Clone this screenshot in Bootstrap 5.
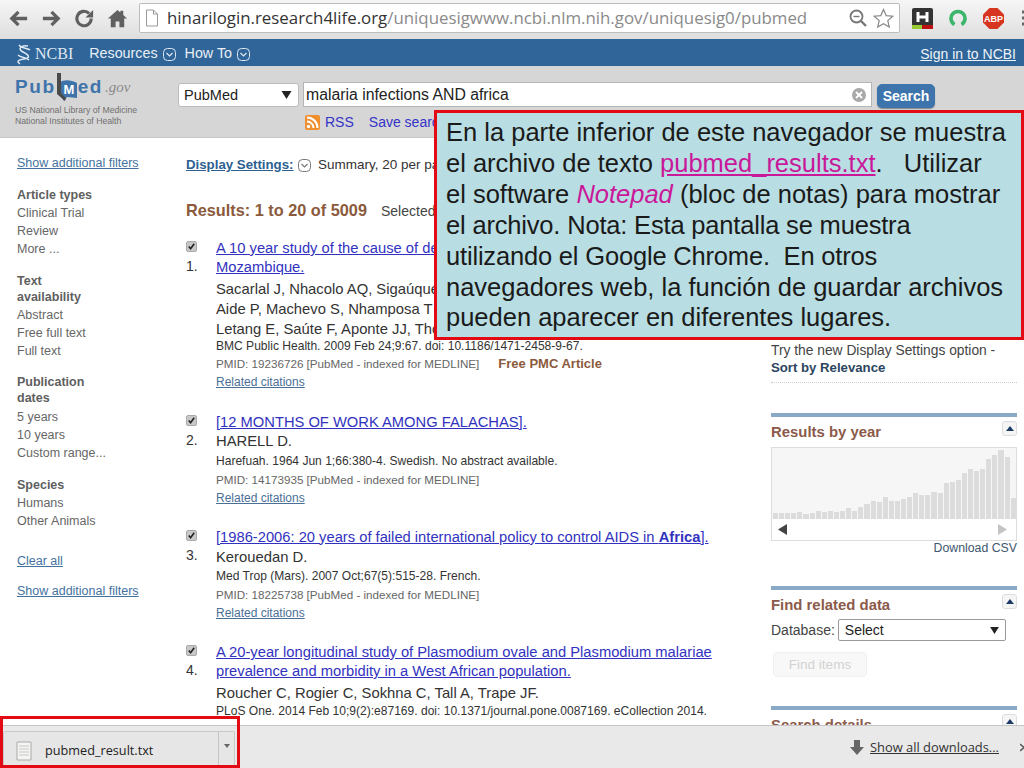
<!DOCTYPE html>
<html lang="es">
<head>
<meta charset="utf-8">
<title>PubMed</title>
<link href="https://cdn.jsdelivr.net/npm/bootstrap@5.3.0/dist/css/bootstrap.min.css" rel="stylesheet">
<style>
html,body{height:768px;overflow:hidden}
body{font-family:"Liberation Sans",Arial,sans-serif;color:#222;background:#fff;position:relative;width:1024px;font-size:13px}
.shell{height:768px;width:1024px}
.chrome-bar{height:39px;background:linear-gradient(#f6f6f6,#dedede);flex:none;padding:0 0 3px 7px;gap:4px;overflow:hidden}
.tool-ico{flex:none;width:23px;height:23px;fill:#606060;stroke:#606060}
.tool-next{margin-left:6px}
.omni{flex:none;width:761px;height:30px;margin-left:6px;background:#fff;border:1px solid #bdbdbd;border-radius:2px;font-family:"Open Sans",sans-serif;font-size:16.85px;color:#8a8a8a;white-space:nowrap;padding:0 5px}
.omni b{font-weight:400;color:#333}
.omni-page{margin-right:8px;flex:none}
.omni-zoom{margin-left:auto;margin-right:5px}
.ext-h{flex:none;margin-left:8px}
.ext-g{flex:none;margin-left:12px}
.ext-a{flex:none;margin-left:12px}
.ext-m{flex:none;margin-left:14px}
.ncbi-bar{height:27px;background:#2f6598;flex:none;color:#e9eff6;padding:3px 8px 0 15px}
.ncbi-name{font-family:"Liberation Serif",serif;font-size:16px;margin-left:3px;margin-right:16px;color:#dfe8f2}
.ncbi-item{font-size:14.3px;font-weight:500;margin-right:5px}
.ncbi-gap{margin-right:9px}
.ncbi-sign{font-size:14px;color:#eef3fa;text-decoration:underline}
.hdr{height:72px;background:#d6d6d6;flex:none;border-bottom:1px solid #c8c8c8;padding-left:15px}
.logo-col{width:163px;flex:none;padding-top:7px}
.logo-word{font-size:19px;font-weight:700;color:#3f74ab;line-height:28px;height:28px;white-space:nowrap;letter-spacing:1.6px;margin-bottom:4px}
.logo-gov{font-family:"Liberation Serif",serif;font-style:italic;font-weight:400;font-size:15px;color:#8a8a8a;letter-spacing:0;margin-left:2px}
.logo-sub{font-size:8.7px;line-height:11px;color:#707070;white-space:nowrap}
.search-row{padding-top:16px}
.db-select{width:121px;height:24px;margin-top:1px;font-size:14.5px;line-height:22px;padding:0 0 0 5px;border:1px solid #bbb;border-radius:3px;color:#222;font-family:"Liberation Sans",sans-serif;background-size:11px 8px;background-position:right 6px center;background-image:url("data:image/svg+xml,%3Csvg xmlns='http://www.w3.org/2000/svg' viewBox='0 0 10 8'%3E%3Cpath d='M0 0h10L5 8z' fill='%23222'/%3E%3C/svg%3E")}
.q-wrap{width:569px;height:25px;margin-left:4px;position:relative}
.q-input{width:100%;height:25px;font-size:15.8px;padding:1px 2px 0;border:1px solid #b5b5b5;border-radius:0;color:#222;font-family:"Liberation Sans",sans-serif}
.q-clear{position:absolute;right:6px;top:6px;width:14px;height:14px}
.go-btn{width:58px;height:24px;margin:2px 0 0 5px;padding:0;background:#3d74ab;border:1px solid #3d74ab;border-radius:5px;color:#fff;font-weight:700;font-size:14px;line-height:22px;box-shadow:0 1px 1px #888}
.rss-row{margin-top:6px;margin-left:127px;font-size:14px;color:#3434c8;white-space:nowrap;line-height:16px;height:16px}
.rss-row span{margin-left:5px;margin-right:10px}
.body-row{flex:1 1 0;min-height:0;overflow:hidden}
.side-col{width:186px;flex:none;padding:16px 0 0 17px;color:#666;font-size:12.5px}
.side-col div{white-space:nowrap}
.s-row{line-height:18px}
.s-link{line-height:18px;color:#44729e;text-decoration:underline}
.s-h{line-height:16px;font-weight:700;color:#5f5f5f}
.s-g14{margin-top:14px}
.s-g15{margin-top:15px}
.s-g2{margin-top:2px}
.s-g1{margin-top:1px}
.s-g22{margin-top:22px}
.s-g12{margin-top:12px}
.main-col{width:570px;flex:none;padding-top:18px;white-space:nowrap;overflow:hidden}
.disp{line-height:18px;font-size:13.5px;color:#333}
.disp-link{color:#2d5f91;font-weight:700;font-size:13.25px;text-decoration:underline}
.disp-ico{margin:0 3px 0 1px}
.res-line{line-height:20px;margin-top:26px;font-size:16.3px}
.res-line b{color:#8b5a3c;margin-right:14px}
.res-line span{font-size:14px;color:#444}
.rec{display:flex}
.rec-1{margin-top:18px}
.rec-2{margin-top:22.5px}
.rec-3{margin-top:20.5px}
.rec-4{margin-top:21.5px}
.rec-l{width:30px;flex:none;font-size:14px;color:#333;line-height:19px}
.rec-check.form-check-input{display:block;width:11px;height:11px;margin:2px 0 5px 0;border-radius:2px;border:1px solid #aaa;background-size:100%;background-color:#c8c8c8;background-image:url("data:image/svg+xml,%3Csvg xmlns='http://www.w3.org/2000/svg' viewBox='0 0 10 10'%3E%3Cpath d='M2 5l2 2.5L8 2' fill='none' stroke='%23222' stroke-width='1.8'/%3E%3C/svg%3E")}
.rec-t{line-height:19px;font-size:14.72px;color:#3232c0;text-decoration:underline;display:block}
.rec-a{line-height:20px;font-size:14.8px;color:#333}
.rec-j{line-height:18px;font-size:12.05px;color:#333}
.rec-p{line-height:18px;font-size:11.65px;color:#666}
.rec-r{line-height:18px;font-size:12px;color:#4a7096;text-decoration:underline;display:block}
.rec-free{color:#8b5a3c;font-weight:700;margin-left:19px;font-size:13px}
.after-2{margin-top:1.5px}
.pull-2{margin-top:-2px}
.push-1{margin-top:1px}
.pull-1{margin-top:-1px}
.right-col{width:246px;flex:none;margin-left:15px;padding-top:204px;font-size:13.8px;color:#444}
.tip{line-height:17px;white-space:nowrap}
.tip b{color:#2c4560;font-weight:700;font-size:13.2px}
.dots{border-bottom:1px dotted #ccc;margin-top:6px;height:1px}
.pane{border-top:4px solid #8aa9c6;position:relative}
.pane-a{margin-top:30px}
.pane-b{margin-top:31px}
.pane-c{margin-top:29px}
.pane-h{font-size:14.9px;font-weight:700;color:#8b5a4a;line-height:20px;margin-top:5px}
.pane-btn{position:absolute;right:0;top:4px;width:15px;height:15px;border:1px solid #ddd;border-radius:3px;background:#f5f5f5}
.pane-btn::after{content:"";position:absolute;left:3px;top:4px;border:4px solid transparent;border-top:0;border-bottom:5px solid #1e3a66}
.chart-box{height:94px;border:1px solid #ddd;margin-top:5px}
.chart-bars{height:71px;background:#f6f6f6;gap:1px;padding:0 0 0 1px}
.yr-bar{flex:1 1 0;background:#dcdcdc}
.chart-nav{height:21px;padding:0 9px 0 6px}
.csv{text-align:right;color:#3e566e;font-size:12.3px;line-height:14px}
.db-row{margin-top:4px;line-height:22px;height:22px;font-size:14px;white-space:nowrap}
.db2{width:168px;flex:none;height:22px;font-size:14px;padding:0 0 0 6px;margin-left:3px;border:1px solid #999;border-radius:2px;color:#222;line-height:20px;font-family:"Liberation Sans",sans-serif;background-size:9px 7px;background-position:right 6px center;background-image:url("data:image/svg+xml,%3Csvg xmlns='http://www.w3.org/2000/svg' viewBox='0 0 10 8'%3E%3Cpath d='M0 0h10L5 8z' fill='%23222'/%3E%3C/svg%3E")}
.find-btn.btn:disabled{margin:11px 0 0 2px;width:94px;height:25px;padding:0;font-size:13.5px;color:#d2d2d2;background:#f8f8f8;border:1px solid #f0f0f0;border-radius:4px;line-height:23px;display:block;opacity:1}
.dl-bar{height:43px;background:#e9e9e9;border-top:1px solid #c6c6c6;flex:none;padding:5px 0 0 3px;position:relative;z-index:2;overflow:hidden}
.dl-item{width:232px;height:38px;border:1px solid #c9c9c9;border-bottom:0;background:#e6e6e6;border-radius:2px 2px 0 0;font-family:"Open Sans",sans-serif;font-size:12.7px;color:#222;padding-left:12px}
.dl-name{margin-left:13px;flex:1 1 auto}
.dl-more{width:16px;border-left:1px solid #c4c4c4;height:100%;position:relative}
.dl-more::after{content:"";position:absolute;left:5px;top:12px;border:3.5px solid transparent;border-top:4px solid #666;border-bottom:0}
.dl-all{font-family:"Open Sans",sans-serif;font-size:12.9px;color:#333;text-decoration:underline;margin-left:6px}
.dl-x{margin-left:21px;flex:none}
.callout{position:absolute;left:434px;top:110px;width:590px;height:230px;background:#b8dde2;border:3px solid #e40a14;padding:4px 8px 0 9px;font-size:25.5px;line-height:30.9px;color:#1a1a1a;white-space:nowrap;z-index:5}
.callout-link{color:#c9189a;text-decoration:underline}
.callout i{color:#c9189a}
.tight-line{letter-spacing:-.18px}
.red-frame{position:absolute;left:0;top:716px;width:240px;height:52px;border:3px solid #e40a14;z-index:6;pointer-events:none}
</style>
</head>
<body>
<div class="shell d-flex flex-column">

  <div class="chrome-bar d-flex align-items-center">
    <svg class="tool-ico" viewBox="0 0 24 24"><path d="M21 12H6M12 5l-7 7 7 7" fill="none" stroke-width="3.4"/></svg>
    <svg class="tool-ico tool-next" viewBox="0 0 24 24"><path d="M3 12h15M12 5l7 7-7 7" fill="none" stroke-width="3.4"/></svg>
    <svg class="tool-ico tool-next" viewBox="0 0 24 24"><path d="M19 12a7.5 7.5 0 1 1-2.2-5.3" fill="none" stroke-width="3.2"/><path d="M21 3v8h-8z" stroke="none"/></svg>
    <svg class="tool-ico tool-next" viewBox="0 0 24 24"><path d="M12 3L2 12h3v9h5v-6h4v6h5v-9h3l-4-3.6V4h-3v1.7z" stroke="none"/></svg>
    <div class="omni d-flex align-items-center">
      <svg width="14" height="18" viewBox="0 0 14 18" class="omni-page"><path d="M1.5 1h7l4 4v12h-11zM8.5 1v4h4" fill="#fff" stroke="#999"/></svg>
      <span><b>hinarilogin.research4life.org</b>/uniquesigwww.ncbi.nlm.nih.gov/uniquesig0/pubmed</span>
      <svg width="20" height="20" viewBox="0 0 20 20" class="omni-zoom"><circle cx="8.5" cy="8.5" r="6" fill="none" stroke="#777" stroke-width="1.8"/><path d="M13 13l5 5" stroke="#777" stroke-width="2.4"/><path d="M5.5 8.5h6" stroke="#777" stroke-width="1.4"/></svg>
      <svg width="21" height="21" viewBox="0 0 21 21"><path d="M10.500 1.500l2.700 6.100 6.600.6-5 4.400 1.500 6.500-5.800-3.400-5.800 3.400 1.500-6.500-5-4.400 6.600-.6z" fill="#fff" stroke="#888" stroke-width="1.2"/></svg>
    </div>
    <svg width="21" height="21" viewBox="0 0 21 21" class="ext-h"><rect width="21" height="21" rx="2" fill="#333"/><rect y="17" width="10" height="4" fill="#9c3"/><rect x="10" y="17" width="11" height="4" fill="#b11"/><path d="M6 4v10M15 4v10M6 9h9" stroke="#fff" stroke-width="3"/></svg>
    <svg width="18" height="18" viewBox="0 0 18 18" class="ext-g"><path d="M5.500 15.500A7 7 0 1 1 12.500 15.500" fill="none" stroke="#3db56b" stroke-width="3.600"/></svg>
    <svg width="21" height="21" viewBox="0 0 21 21" class="ext-a"><path d="M6.500 0h8L21 6.500v8L14.500 21h-8L0 14.500v-8z" fill="#d6361f"/><text x="10.500" y="14" text-anchor="middle" font-size="9" font-weight="700" fill="#fff" font-family="Liberation Sans">ABP</text></svg>
    <svg width="4" height="16" viewBox="0 0 4 16" class="ext-m"><path d="M0 2h4M0 8h4M0 14h4" stroke="#666" stroke-width="3"/></svg>
  </div>

  <div class="ncbi-bar d-flex align-items-center">
    <svg width="17" height="21" viewBox="0 0 17 21"><path d="M13 2C6 1 2 5 8 8s8 6 1 7-7 3-4 5M4 1c3 4 9 3 11 5M3 11c3 3 8 2 11 5" fill="none" stroke="#dfe8f2" stroke-width="1.500"/></svg>
    <span class="ncbi-name">NCBI</span>
    <span class="ncbi-item">Resources</span>
    <svg width="13" height="13" viewBox="0 0 13 13" class="ncbi-gap"><rect x=".5" y=".5" width="12" height="12" rx="4" fill="none" stroke="#dfe8f2"/><path d="M3.500 5l3 3 3-3" fill="none" stroke="#dfe8f2" stroke-width="1.200"/></svg>
    <span class="ncbi-item">How To</span>
    <svg width="13" height="13" viewBox="0 0 13 13"><rect x=".5" y=".5" width="12" height="12" rx="4" fill="none" stroke="#dfe8f2"/><path d="M3.500 5l3 3 3-3" fill="none" stroke="#dfe8f2" stroke-width="1.200"/></svg>
    <a class="ncbi-sign ms-auto">Sign in to NCBI</a>
  </div>

  <div class="hdr d-flex">
    <div class="logo-col">
      <div class="logo-word d-flex align-items-start"><span>Pub</span><svg width="22" height="28" viewBox="0 0 22 28"><path d="M3 10C8 6 15 7 21 10v15l-10-1-3 4-5-7z" fill="#3f74ab"/><path d="M1 0h4v20l5 5-1 3-8-7z" fill="#4a4a4a"/><text x="13" y="21" text-anchor="middle" font-size="13" font-weight="700" letter-spacing="0" fill="#fff" font-family="Liberation Sans">M</text></svg><span>ed</span><span class="logo-gov">.gov</span></div>
      <div class="logo-sub">US National Library of Medicine</div>
      <div class="logo-sub">National Institutes of Health</div>
    </div>
    <div class="search-row">
      <div class="d-flex">
        <select class="form-select db-select" aria-label="Database"><option>PubMed</option></select>
        <div class="q-wrap">
          <input class="form-control q-input" value="malaria infections AND africa" aria-label="Search">
          <svg class="q-clear" viewBox="0 0 14 14"><circle cx="7" cy="7" r="7" fill="#a9a9a9"/><path d="M4 4l6 6M10 4l-6 6" stroke="#fff" stroke-width="1.800"/></svg>
        </div>
        <button class="btn go-btn" type="button">Search</button>
      </div>
      <div class="rss-row d-flex align-items-center">
        <svg width="15" height="15" viewBox="0 0 15 15"><rect width="15" height="15" rx="2" fill="#ef8f2e"/><circle cx="3.500" cy="11.500" r="1.700" fill="#fff"/><path d="M2 6.500a6.500 6.500 0 0 1 6.500 6.500M2 2.500a10.500 10.500 0 0 1 10.500 10.500" fill="none" stroke="#fff" stroke-width="2"/></svg>
        <span>RSS</span><span>Save search</span>
      </div>
    </div>
  </div>

  <div class="body-row d-flex">
    <div class="side-col">
      <div class="s-link">Show additional filters</div>
      <div class="s-h s-g15">Article types</div>
      <div class="s-row s-g1">Clinical Trial</div>
      <div class="s-row">Review</div>
      <div class="s-row">More ...</div>
      <div class="s-h s-g15">Text</div>
      <div class="s-h">availability</div>
      <div class="s-row s-g1">Abstract</div>
      <div class="s-row">Free full text</div>
      <div class="s-row">Full text</div>
      <div class="s-h s-g14">Publication</div>
      <div class="s-h">dates</div>
      <div class="s-row s-g2">5 years</div>
      <div class="s-row">10 years</div>
      <div class="s-row">Custom range...</div>
      <div class="s-h s-g15">Species</div>
      <div class="s-row s-g1">Humans</div>
      <div class="s-row">Other Animals</div>
      <div class="s-link s-g22">Clear all</div>
      <div class="s-link s-g12">Show additional filters</div>
    </div>

    <div class="main-col">
      <div class="disp"><a class="disp-link">Display Settings:</a> <svg width="13" height="13" viewBox="0 0 13 13" class="disp-ico"><rect x=".5" y=".5" width="12" height="12" rx="4" fill="none" stroke="#777"/><path d="M3.500 5l3 3 3-3" fill="none" stroke="#777" stroke-width="1.200"/></svg> Summary, 20 per page</div>
      <div class="res-line"><b>Results: 1 to 20 of 5009</b><span>Selected</span></div>

      <div class="rec rec-1">
        <div class="rec-l"><input class="form-check-input rec-check" type="checkbox" checked aria-label="1">1.</div>
        <div>
          <a class="rec-t">A 10 year study of the cause of death</a>
          <a class="rec-t">Mozambique.</a>
          <div class="rec-a after-2">Sacarlal J, Nhacolo AQ, Sigaúque B</div>
          <div class="rec-a">Aide P, Machevo S, Nhamposa T</div>
          <div class="rec-a">Letang E, Saúte F, Aponte JJ, Thompson R</div>
          <div class="rec-j pull-2">BMC Public Health. 2009 Feb 24;9:67. doi: 10.1186/1471-2458-9-67.</div>
          <div class="rec-p">PMID: 19236726 [PubMed - indexed for MEDLINE]<span class="rec-free">Free PMC Article</span></div>
          <a class="rec-r">Related citations</a>
        </div>
      </div>

      <div class="rec rec-2">
        <div class="rec-l"><input class="form-check-input rec-check" type="checkbox" checked aria-label="2">2.</div>
        <div>
          <a class="rec-t">[12 MONTHS OF WORK AMONG FALACHAS].</a>
          <div class="rec-a pull-1">HARELL D.</div>
          <div class="rec-j push-1">Harefuah. 1964 Jun 1;66:380-4. Swedish. No abstract available.</div>
          <div class="rec-p push-1">PMID: 14173935 [PubMed - indexed for MEDLINE]</div>
          <a class="rec-r">Related citations</a>
        </div>
      </div>

      <div class="rec rec-3">
        <div class="rec-l"><input class="form-check-input rec-check" type="checkbox" checked aria-label="3">3.</div>
        <div>
          <a class="rec-t">[1986-2006: 20 years of failed international policy to control AIDS in <b>Africa</b>].</a>
          <div class="rec-a">Kerouedan D.</div>
          <div class="rec-j">Med Trop (Mars). 2007 Oct;67(5):515-28. French.</div>
          <div class="rec-p push-1">PMID: 18225738 [PubMed - indexed for MEDLINE]</div>
          <a class="rec-r">Related citations</a>
        </div>
      </div>

      <div class="rec rec-4">
        <div class="rec-l"><input class="form-check-input rec-check" type="checkbox" checked aria-label="4">4.</div>
        <div>
          <a class="rec-t">A 20-year longitudinal study of Plasmodium ovale and Plasmodium malariae</a>
          <a class="rec-t">prevalence and morbidity in a West African population.</a>
          <div class="rec-a after-2">Roucher C, Rogier C, Sokhna C, Tall A, Trape JF.</div>
          <div class="rec-j pull-1">PLoS One. 2014 Feb 10;9(2):e87169. doi: 10.1371/journal.pone.0087169. eCollection 2014.</div>
        </div>
      </div>
    </div>

    <div class="right-col">
      <div class="tip">Try the new Display Settings option -</div>
      <div class="tip"><b>Sort by Relevance</b></div>
      <div class="dots"></div>

      <div class="pane pane-a">
        <div class="pane-btn"></div>
        <div class="pane-h">Results by year</div>
        <div class="chart-box">
          <div class="chart-bars d-flex align-items-end">
            <div class="yr-bar" style="height:6px"></div><div class="yr-bar" style="height:6px"></div><div class="yr-bar" style="height:6px"></div><div class="yr-bar" style="height:6px"></div><div class="yr-bar" style="height:7px"></div><div class="yr-bar" style="height:5px"></div><div class="yr-bar" style="height:6px"></div><div class="yr-bar" style="height:8px"></div><div class="yr-bar" style="height:7px"></div><div class="yr-bar" style="height:8px"></div><div class="yr-bar" style="height:7px"></div><div class="yr-bar" style="height:8px"></div><div class="yr-bar" style="height:11px"></div><div class="yr-bar" style="height:8px"></div><div class="yr-bar" style="height:12px"></div><div class="yr-bar" style="height:15px"></div><div class="yr-bar" style="height:18px"></div><div class="yr-bar" style="height:17px"></div><div class="yr-bar" style="height:22px"></div><div class="yr-bar" style="height:18px"></div><div class="yr-bar" style="height:18px"></div><div class="yr-bar" style="height:20px"></div><div class="yr-bar" style="height:22px"></div><div class="yr-bar" style="height:26px"></div><div class="yr-bar" style="height:24px"></div><div class="yr-bar" style="height:24px"></div><div class="yr-bar" style="height:27px"></div><div class="yr-bar" style="height:26px"></div><div class="yr-bar" style="height:36px"></div><div class="yr-bar" style="height:37px"></div><div class="yr-bar" style="height:39px"></div><div class="yr-bar" style="height:46px"></div><div class="yr-bar" style="height:50px"></div><div class="yr-bar" style="height:48px"></div><div class="yr-bar" style="height:50px"></div><div class="yr-bar" style="height:60px"></div><div class="yr-bar" style="height:64px"></div><div class="yr-bar" style="height:69px"></div><div class="yr-bar" style="height:62px"></div><div class="yr-bar" style="height:21px"></div>
          </div>
          <div class="chart-nav d-flex align-items-center justify-content-between">
            <svg width="9" height="11" viewBox="0 0 9 11"><path d="M9 0v11L0 5.500z" fill="#444"/></svg>
            <svg width="9" height="11" viewBox="0 0 9 11"><path d="M0 0v11l9-5.500z" fill="#c4c4c4"/></svg>
          </div>
        </div>
        <div class="csv">Download CSV</div>
      </div>

      <div class="pane pane-b">
        <div class="pane-btn"></div>
        <div class="pane-h">Find related data</div>
        <div class="db-row d-flex align-items-center">Database: <select class="form-select db2" aria-label="Database"><option>Select</option></select></div>
        <button class="btn find-btn" type="button" disabled>Find items</button>
      </div>

      <div class="pane pane-c">
        <div class="pane-btn"></div>
        <div class="pane-h">Search details</div>
      </div>
    </div>
  </div>

  <div class="dl-bar d-flex">
    <div class="dl-item d-flex align-items-center">
      <svg width="16" height="20" viewBox="0 0 16 20"><path d="M1 1h14v18H1z" fill="#f4f4f0" stroke="#aaa"/><path d="M3 5h10M3 8h10M3 11h10M3 14h10" stroke="#c8c8c8"/></svg>
      <span class="dl-name">pubmed_result.txt</span>
      <span class="dl-more"></span>
    </div>
    <div class="ms-auto d-flex align-items-center pb-1">
      <svg width="14" height="15" viewBox="0 0 14 15"><path d="M4 0h6v7h4l-7 8-7-8h4z" fill="#666"/></svg>
      <a class="dl-all">Show all downloads...</a>
      <svg width="4" height="9" viewBox="0 0 4 9" class="dl-x"><path d="M0 1l4 3.500M0 8l4-3.500" stroke="#555" stroke-width="1.500"/></svg>
    </div>
  </div>
</div>

<div class="callout">En la parte inferior de este navegador se muestra<br>el archivo de texto <a class="callout-link">pubmed_results.txt</a>.&nbsp;&nbsp; Utilizar<br>el software <i>Notepad</i> (bloc de notas) para mostrar<br><span class="tight-line">el archivo. Nota: Esta pantalla se muestra</span><br><span class="tight-line">utilizando el Google Chrome.&nbsp; En otros</span><br>navegadores web, la función de guardar archivos<br>pueden aparecer en diferentes lugares.</div>
<div class="red-frame"></div>

<script src="https://cdn.jsdelivr.net/npm/bootstrap@5.3.0/dist/js/bootstrap.bundle.min.js"></script>
</body>
</html>
